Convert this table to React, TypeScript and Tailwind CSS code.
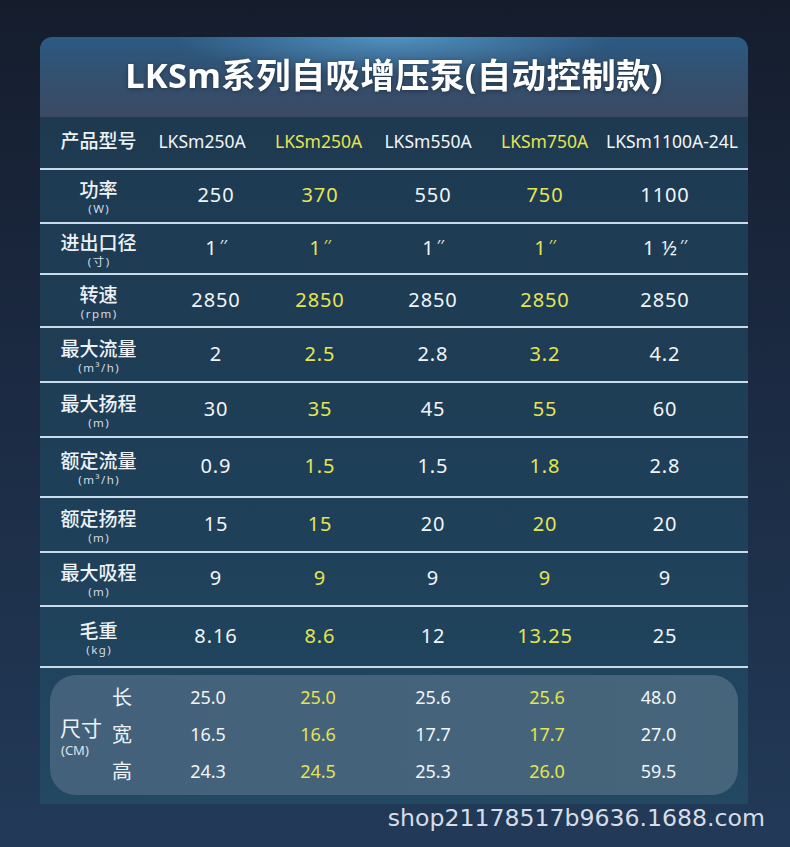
const WHITE = 'text-[#f2f5f8]';
const YELLOW = 'text-[#e6e453]';

const colGrid = 'grid grid-cols-[117px_118px_90px_136px_88px_152px]';

type Row = { label: string; unit: string; h: string; vals: React.ReactNode[] };

const inch = (n: string) => (
    <span>
        {n}
        <span className="relative -top-[5px] ml-[2px] text-[14px] italic tracking-[0.5px]">′′</span>
    </span>
);

const rows: Row[] = [
    { label: '功率', unit: '(W)', h: 'h-[54px]', vals: ['250', '370', '550', '750', '1100'] },
    { label: '进出口径', unit: '(寸)', h: 'h-[51px]', vals: [inch('1'), inch('1'), inch('1'), inch('1'), inch('1 ½')] },
    { label: '转速', unit: '(rpm)', h: 'h-[53px]', vals: ['2850', '2850', '2850', '2850', '2850'] },
    { label: '最大流量', unit: '(m³/h)', h: 'h-[55px]', vals: ['2', '2.5', '2.8', '3.2', '4.2'] },
    { label: '最大扬程', unit: '(m)', h: 'h-[55px]', vals: ['30', '35', '45', '55', '60'] },
    { label: '额定流量', unit: '(m³/h)', h: 'h-[60px]', vals: ['0.9', '1.5', '1.5', '1.8', '2.8'] },
    { label: '额定扬程', unit: '(m)', h: 'h-[55px]', vals: ['15', '15', '20', '20', '20'] },
    { label: '最大吸程', unit: '(m)', h: 'h-[54px]', vals: ['9', '9', '9', '9', '9'] },
    { label: '毛重', unit: '(kg)', h: 'h-[61px]', vals: ['8.16', '8.6', '12', '13.25', '25'] },
];

const models = ['LKSm250A', 'LKSm250A', 'LKSm550A', 'LKSm750A', 'LKSm1100A-24L'];
const headPad = ['pr-[28px]', 'pr-[10px]', 'pr-[10px]', 'pr-[8px]', 'pl-[14px]'];

const sizes = [
    { k: '长', vals: ['25.0', '25.0', '25.6', '25.6', '48.0'] },
    { k: '宽', vals: ['16.5', '16.6', '17.7', '17.7', '27.0'] },
    { k: '高', vals: ['24.3', '24.5', '25.3', '26.0', '59.5'] },
];
const sizePad = ['pr-[16px]', 'pr-[4px]', '', 'pl-[4px]', ''];

export default function App() {
    return (
        <div
            className="w-[790px] h-[847px] overflow-hidden pt-[37px] px-[40px] bg-[linear-gradient(180deg,#151d2d_0%,#1b2a42_45%,#223a58_100%)]"
            style={{ fontFamily: '"Noto Sans", "Noto Sans CJK SC", sans-serif' }}
        >
            <div className="w-[708px]">
                {/* Title */}
                <div className="h-[80px] rounded-t-[12px] flex items-center justify-center bg-[radial-gradient(ellipse_220px_40px_at_50%_0%,rgba(110,190,245,0.55),transparent),linear-gradient(180deg,#2b5a83_0%,#33506f_50%,#3a4a62_100%)]">
                    <h1 className="text-[34.5px] font-bold text-white tracking-[0.3px] drop-shadow-[0_1px_2px_rgba(0,0,0,0.35)] -mt-[4px]">
                        LKSm系列自吸增压泵(自动控制款)
                    </h1>
                </div>

                {/* Table */}
                <div className="bg-[linear-gradient(180deg,#1d3a51_0%,#1f4059_60%,#224862_100%)]">
                    <div className={`${colGrid} h-[53px] border-b-2 border-[#c8dbea] items-center`}>
                        <div className="text-center text-[19px] font-medium text-[#eef2f6] pb-[2px]">产品型号</div>
                        {models.map((m, i) => (
                            <div
                                key={i}
                                className={`text-center whitespace-nowrap text-[17.5px] pb-[2px] ${headPad[i]} ${i % 2 === 1 ? YELLOW : WHITE}`}
                            >
                                {m}
                            </div>
                        ))}
                    </div>

                    {rows.map(r => (
                        <div key={r.label} className={`${colGrid} ${r.h} border-b-2 border-[#c8dbea] items-center`}>
                            <div className="flex flex-col items-center pt-[3px]">
                                <span className="text-[19px] leading-[22px] font-medium text-[#eef2f6]">{r.label}</span>
                                <span className="text-[11.5px] leading-[15px] tracking-[1.5px] pl-[1.5px] text-[#d3dce6]">{r.unit}</span>
                            </div>
                            {r.vals.map((v, i) => (
                                <div
                                    key={i}
                                    className={`text-center text-[20px] tracking-[0.9px] whitespace-nowrap pb-[2px] ${i % 2 === 1 ? YELLOW : WHITE}`}
                                >
                                    {v}
                                </div>
                            ))}
                        </div>
                    ))}

                    {/* Sizes */}
                    <div className="pt-[7px] pb-[9px] px-[10px]">
                        <div className="h-[120px] rounded-[26px] bg-[linear-gradient(90deg,#43617a_0%,#46657b_100%)] pt-[4px] grid grid-cols-[62px_45px_118px_90px_136px_88px_139px] grid-rows-[37px_37px_37px]">
                            <div className="row-span-3 flex flex-col justify-center pl-[10px] pt-[4px]">
                                <span className="text-[21px] leading-[27px] text-[#eef2f6]">尺寸</span>
                                <span className="text-[13px] leading-[17px] text-[#dde4ec] pl-[1px]">(CM)</span>
                            </div>
                            {sizes.map(s => (
                                <div key={s.k} className="contents">
                                    <div className="flex items-center text-[20px] text-[#eef2f6]">{s.k}</div>
                                    {s.vals.map((v, i) => (
                                        <div
                                            key={i}
                                            className={`flex items-center justify-center text-[18px] ${sizePad[i]} ${i % 2 === 1 ? YELLOW : WHITE}`}
                                        >
                                            {v}
                                        </div>
                                    ))}
                                </div>
                            ))}
                        </div>
                    </div>
                </div>
            </div>

            {/* Footer */}
            <div
                className="text-right -mr-[15px] mt-[-1px] text-[23.6px] leading-[30px] text-[#d6dde6]"
                style={{ fontFamily: '"DejaVu Sans", sans-serif' }}
            >
                shop21178517b9636.1688.com
            </div>
        </div>
    );
}
